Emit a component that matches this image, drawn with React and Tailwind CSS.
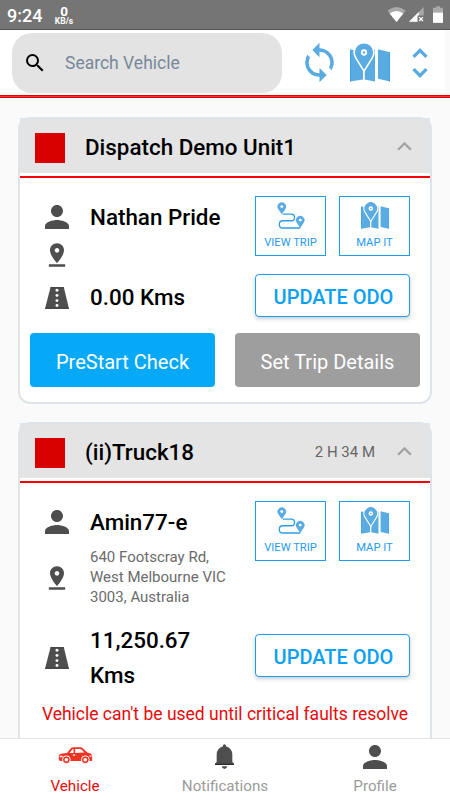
import {
  MdSearch,
  MdSync,
  MdUnfoldMore,
  MdKeyboardArrowUp,
  MdPerson,
  MdPinDrop,
} from 'react-icons/md';

const vehicles = [
  {
    name: 'Dispatch Demo Unit1',
    elapsed: '',
    driver: 'Nathan Pride',
    address: [],
    odometer: ['0.00 Kms'],
  },
  {
    name: '(ii)Truck18',
    elapsed: '2 H 34 M',
    driver: 'Amin77-e',
    address: ['640 Footscray Rd,', 'West Melbourne VIC', '3003, Australia'],
    odometer: ['11,250.67', 'Kms'],
    warning: "Vehicle can't be used until critical faults resolve",
  },
];

const MapIcon = ({ className }) => (
  <svg viewBox="0 0 120 116" className={className}>
    <path d="M0 19L39 25V109L0 115ZM43 25L75 19V115L43 109ZM84 18L120 27V115L84 107Z" fill="#5aabe2" />
    <path d="M1 19V115M119 27V115" stroke="#1d9cf0" strokeWidth="2" />
    <path d="M42 88L15 45A32 32 0 1 1 69 45Z" fill="#fff" />
    <path d="M42 80L19 42A27 27 0 1 1 65 42Z" fill="#5aabe2" />
    <path d="M42 80V116" stroke="#fff" strokeWidth="4" />
    <circle cx="42" cy="28" r="9.5" fill="#fff" />
    <circle cx="42" cy="28" r="3.5" fill="#5aabe2" />
  </svg>
);

const TripIcon = ({ className }) => (
  <svg viewBox="0 0 84 82" className={className} fill="none">
    <path d="M17 37H43C56 37 56 57 43 57H17C3 57 3 79 17 79H70" stroke="#2a9fe8" strokeWidth="4" />
    <path
      d="M14 37L3.5 22A13 13 0 1 1 24.5 22ZM70 79L59.5 63A13 13 0 1 1 80.5 63Z"
      fill="#5aabe2"
    />
    <circle cx="14" cy="14" r="4.5" fill="#fff" />
    <circle cx="70" cy="55" r="4.5" fill="#fff" />
  </svg>
);

const RoadIcon = ({ className }) => (
  <svg viewBox="0 0 74 66" className={className}>
    <path d="M17 0H58L74 66H0Z" fill="#4e4e4e" />
    <path d="M17 1H58M0 65H74" stroke="#222" strokeWidth="2" />
    <g fill="#fff">
      <circle cx="37" cy="9" r="4.5" />
      <circle cx="37" cy="25" r="4.5" />
      <circle cx="37" cy="41" r="4.5" />
      <circle cx="37" cy="56" r="4.5" />
    </g>
  </svg>
);

const BellIcon = ({ className }) => (
  <svg viewBox="0 0 57 75" className={className}>
    <path d="M24 4Q28-3 33 4V7Q51 12 52 32V54L57 59V63H0V59L5 54V32Q6 12 24 7Z" fill="#4e4e4e" />
    <path d="M0 61H57" stroke="#222" strokeWidth="3" />
    <path d="M20 67H37Q35 75 28.5 75T20 67Z" fill="#4e4e4e" />
  </svg>
);

const CarIcon = ({ className }) => (
  <svg viewBox="0 0 104 52" className={className}>
    <path
      d="M4 43L1 38V27Q2 22 8 21L26 18L36 6Q39 1 46 1H66Q72 1 76 5L88 17L98 20Q102 22 103 28V42L99 43Z"
      fill="#ef3323"
    />
    <path d="M34 18L41 9Q43 6 46 6V18ZM51 6H65Q69 6 72 9L79 17L51 18Z" fill="#fff" />
    <path d="M4 29H12M95 28H101M44 25H51" stroke="#fff" strokeWidth="4" />
    <g fill="#ef3323" stroke="#fff" strokeWidth="3">
      <circle cx="24" cy="39" r="12" />
      <circle cx="82" cy="39" r="12" />
    </g>
    <circle cx="24" cy="39" r="5.5" fill="#fff" />
    <circle cx="82" cy="39" r="5.5" fill="#fff" />
  </svg>
);

const StatusBar = () => (
  <div className="flex h-[30px] shrink-0 items-center border-b border-[#555] bg-[#757575] px-[7px] text-white">
    <span className="w-[46px] pt-[3px] text-[18px] font-medium leading-none">9:24</span>
    <div className="flex w-[22px] flex-col items-center pt-px font-bold">
      <span className="text-[13.5px] leading-[12px]">0</span>
      <span className="text-[8.5px] leading-[8px]">KB/s</span>
    </div>
    <svg viewBox="0 0 56 46" className="ml-auto h-[15px] w-[19px]">
      <path d="M0 11Q28-11 56 11L28 46Z" fill="#a9a9a9" />
      <path d="M7 20Q28 4 49 20L28 46Z" fill="#fff" />
    </svg>
    <svg viewBox="0 0 46 46" className="ml-[3px] h-[15px] w-[15px]">
      <path d="M0 45L45 0V45Z" fill="#a9a9a9" />
      <path d="M0 45L30 15V45Z" fill="#fff" />
      <path d="M26 26H46V46H26Z" fill="#757575" />
      <path d="M31 31L43 43M43 31L31 43" stroke="#fff" strokeWidth="4" />
    </svg>
    <svg viewBox="0 0 30 50" className="ml-[9px] h-[17px] w-[10px]">
      <path d="M9 0H21V5H30V19H0V5H9Z" fill="#a9a9a9" />
      <path d="M0 19H30V50H0Z" fill="#fff" />
    </svg>
  </div>
);

const Header = () => (
  <header className="shrink-0">
    <div className="flex h-[65px] pr-[5px]">
      <div className="flex flex-1 items-start bg-white pl-3 pt-[2.5px]">
        <div className="flex h-[60px] w-[270px] items-center rounded-[20px] bg-[#e3e3e3] pl-[11px]">
          <MdSearch size={24} className="text-black" />
          <span className="ml-[18px] mt-[2px] text-[17.5px] text-[#77889a]">Search Vehicle</span>
        </div>
        <div className="flex h-[60px] items-center text-[#5aabe2]">
          <MdSync size={43} className="ml-[16px]" />
          <MapIcon className="ml-[9px] h-[39px] w-[40px]" />
          <MdUnfoldMore size={40} className="ml-[10px]" />
        </div>
      </div>
    </div>
    <div className="h-[3px] border-y border-[#e60000] bg-[#ee3a35]" />
  </header>
);

const ActionButton = ({ icon: Icon, label }) => (
  <button className="flex h-[60px] w-[71px] flex-col items-center border border-[#1f9bf0] pt-[5px] text-[#1f9bf0]">
    <Icon className="h-[27px] w-[28px]" />
    <span className="mt-[6px] whitespace-nowrap text-[11.2px] leading-[16px]">{label}</span>
  </button>
);

const VehicleCard = ({ name, elapsed, driver, address, odometer, warning }) => (
  <section className="relative shrink-0 rounded-[12px] bg-white px-[2px] pb-[2px] pt-px">
    <div className="flex h-[55px] items-center bg-[#e4e4e4] pl-[15px] pr-[11px] pt-[3px]">
      <div className="mt-[2px] h-[30px] w-[30px] bg-[#d90000]" />
      <h2 className="ml-5 mt-[2px] flex-1 whitespace-nowrap text-[22.4px] font-medium text-black">{name}</h2>
      <span className="mr-[15px] text-[15px] text-[#666]">{elapsed}</span>
      <MdKeyboardArrowUp size={29} className="mb-px text-[#a3a3a3]" />
    </div>
    <div className="mt-[3px] h-[2px] bg-[#fa0000]" />

    <div className="flex pl-[19px] pr-5 pt-[18px]">
      <div className="w-[216px]">
        <div className="flex h-[42px] items-center">
          <MdPerson size={36} className="text-[#4e4e4e]" />
          <span className="ml-[15px] mt-[2px] text-[22.4px] font-medium text-black">{driver}</span>
        </div>
        <div className={address.length ? 'flex h-[70px] items-center' : 'flex h-[36px] items-center pb-[3px]'}>
          <MdPinDrop size={28} className="ml-[4px] mr-[19px] shrink-0 text-[#4e4e4e]" />
          <div className="text-[15px] leading-[19.7px] text-[#6b6b6b]">
            {address.map((line) => (
              <div key={line} className="whitespace-nowrap">{line}</div>
            ))}
          </div>
        </div>
      </div>
      <div className="flex gap-[13px]">
        <ActionButton icon={TripIcon} label="VIEW TRIP" />
        <ActionButton icon={MapIcon} label="MAP IT" />
      </div>
    </div>

    <div className={odometer.length > 1 ? 'flex h-[85px] items-center pl-[25px] pr-5' : 'flex h-[43px] items-center pl-[25px] pr-5'}>
      <RoadIcon className="mt-[5px] h-[22px] w-[24px]" />
      <div className="ml-[21px] mt-[4px] text-[22.4px] font-medium leading-[35px] text-black">
        {odometer.map((line) => (
          <div key={line}>{line}</div>
        ))}
      </div>
      <button className="ml-auto h-[43px] w-[155px] rounded-[4px] border border-[#1f9bf0] bg-white pl-[2px] pt-[3px] text-[20px] font-medium text-[#0a9ff2] shadow-[0_2px_4px_rgba(0,0,0,0.2)]">
        UPDATE ODO
      </button>
    </div>

    {warning ? (
      <p className="mb-[60px] mt-[3px] whitespace-nowrap text-center text-[17.5px] text-[#e80a0a]">{warning}</p>
    ) : (
      <div className="flex gap-5 px-[10px] pb-[15px] pt-[16px] text-[20px] text-white">
        <button className="h-[54px] flex-1 rounded-[4px] bg-[#05a9f8] pt-[3px]">PreStart Check</button>
        <button className="h-[54px] flex-1 rounded-[4px] bg-[#9e9e9e] pt-[3px]">Set Trip Details</button>
      </div>
    )}

    {/* frame sits on top of the square header corners */}
    <div className="pointer-events-none absolute inset-0 rounded-[12px] border-2 border-[#dfe4ea]" />
  </section>
);

const NavItem = ({ label, active, children }) => (
  <div className="flex flex-col items-center">
    <div className="flex h-[36px] items-center">{children}</div>
    <span className={active ? 'mt-px leading-[20px] text-[#e80a0a]' : 'mt-px leading-[20px]'}>{label}</span>
  </div>
);

const BottomNav = () => (
  <nav className="grid h-[62px] shrink-0 grid-cols-3 border-t border-[#e3e3e3] bg-white text-[15.2px] text-[#9b9b9b]">
    <NavItem label="Vehicle" active>
      <CarIcon className="mb-[4px] h-[17px] w-[35px]" />
    </NavItem>
    <NavItem label="Notifications">
      <BellIcon className="mb-px mr-[2px] h-[25px] w-[19px]" />
    </NavItem>
    <NavItem label="Profile">
      <MdPerson size={36} className="mr-px text-[#4e4e4e]" />
    </NavItem>
  </nav>
);

export default function App() {
  return (
    <div className="flex h-[800px] w-[450px] flex-col overflow-hidden bg-[#fafafa] font-[Roboto,sans-serif]">
      <StatusBar />
      <Header />
      <main className="flex min-h-0 flex-1 flex-col gap-[18px] overflow-hidden px-[18px] pt-[19px]">
        {vehicles.map((v) => (
          <VehicleCard key={v.name} {...v} />
        ))}
      </main>
      <BottomNav />
    </div>
  );
}
